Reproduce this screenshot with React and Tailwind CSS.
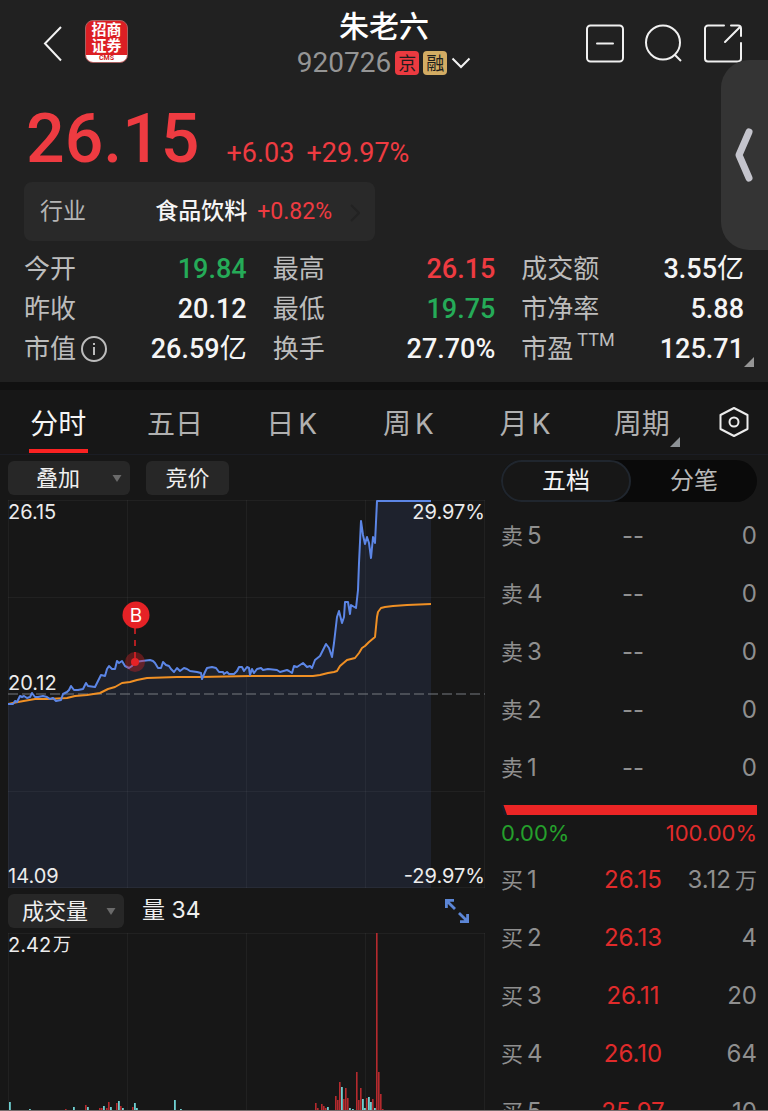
import { useState } from "react";
import clsx from "clsx";

const STATS = [
  { label: "今开", value: "19.84", tone: "down" },
  { label: "最高", value: "26.15", tone: "up" },
  { label: "成交额", value: "3.55亿" },
  { label: "昨收", value: "20.12" },
  { label: "最低", value: "19.75", tone: "down" },
  { label: "市净率", value: "5.88" },
  { label: "市值", value: "26.59亿", info: true },
  { label: "换手", value: "27.70%" },
  { label: "市盈", value: "125.71", sup: "TTM", more: true },
];

const TABS = [
  ["分时"],
  ["五日"],
  ["日", "K"],
  ["周", "K"],
  ["月", "K"],
  ["周期"],
];

const SELLS = [5, 4, 3, 2, 1].map((n) => ({
  side: "卖",
  level: n,
  price: "--",
  volume: "0",
}));

const BUYS = [
  { side: "买", level: 1, price: "26.15", volume: "3.12", unit: "万" },
  { side: "买", level: 2, price: "26.13", volume: "4" },
  { side: "买", level: 3, price: "26.11", volume: "20" },
  { side: "买", level: 4, price: "26.10", volume: "64" },
  { side: "买", level: 5, price: "25.97", volume: "10" },
];

const PRICE_LINE =
  "0,204 5,204 7,201 9,202 12,196 14,197 16,196 19,198 22,197 24,193 27,197 30,197 35,196 39,197 42,199 45,198 48,201 53,200 55,194 59,192 61,190 63,186 66,190 70,190 75,189 78,183 80,186 87,187 90,181 93,175 97,176 99,169 101,166 104,169 107,169 109,161 111,163 114,161 117,166 121,168 124,166 127,162 134,161 142,160 145,161 147,163 150,168 153,168 155,162 158,165 161,166 163,169 166,172 169,168 172,171 176,168 179,169 182,171 189,172 193,173 194,179 197,172 199,168 204,167 208,168 211,172 215,172 216,174 219,172 221,174 226,174 229,171 231,167 234,167 236,171 239,167 241,168 242,175 244,169 246,173 249,169 253,168 255,170 260,169 269,170 272,172 279,170 281,171 284,173 286,166 289,167 295,163 299,167 302,166 304,168 307,160 312,156 318,144 321,148 324,157 326,143 329,117 331,111 334,123 336,117 337,102 340,102 342,114 343,105 348,108 350,90 351,63 353,21 355,35 357,44 359,37 361,43 363,58 365,37 367,43 369,1 423,1";

const AVG_LINE =
  "0,204 10,202 27,199 40,199 59,198 67,196 79,195 92,193 100,189 107,187 114,183 122,182 129,180 139,178 169,177 192,177 242,176 305,176 312,175 320,173 326,172 329,171 332,166 339,160 347,158 351,153 354,148 357,146 361,142 367,137 369,117 370,112 373,108 377,107 385,106 399,105 423,104";

// [x, height, direction]
const BARS = [
  [2, 8, "d"], [22, 1, "d"], [58, 1, "u"], [66, 3, "d"], [78, 5, "u"],
  [80, 3, "d"], [92, 2, "u"], [94, 2, "u"], [96, 4, "d"], [99, 2, "u"],
  [101, 8, "u"], [103, 3, "d"], [109, 7, "u"], [111, 9, "d"], [113, 4, "u"],
  [115, 2, "d"], [125, 3, "u"], [127, 7, "d"], [129, 2, "d"], [167, 10, "d"],
  [173, 1, "d"], [308, 7, "u"], [310, 2, "u"], [314, 6, "u"], [316, 4, "u"],
  [318, 2, "u"], [320, 3, "d"], [328, 14, "u"], [330, 10, "u"], [332, 28, "u"],
  [334, 23, "d"], [336, 11, "u"], [338, 22, "u"], [340, 12, "u"], [342, 2, "d"],
  [345, 1, "d"], [349, 38, "u"], [351, 10, "u"], [353, 22, "u"], [355, 11, "d"],
  [357, 2, "d"], [359, 12, "u"], [361, 13, "d"], [363, 8, "d"], [365, 11, "u"],
  [367, 2, "d"], [369, 177, "u"], [371, 38, "u"], [373, 16, "u"], [375, 1, "u"],
];

function TopBar() {
  return (
    <div className="grid h-[88px] grid-cols-[1fr_auto_1fr]">
      <div className="flex items-start pl-[40px] pt-5">
        <button aria-label="返回" className="h-[46px] w-[26px]">
          <svg viewBox="0 0 26 46" className="h-full w-full" fill="none" stroke="#f2f2f2" strokeWidth="2">
            <path d="M21 7 5 23.500l16 17" />
          </svg>
        </button>
        <div className="ml-[19px] flex h-[43px] w-[43px] flex-col overflow-hidden rounded-lg border border-[#a86060] bg-[#dc1f24] text-white">
          <span className="mt-px text-center text-[15px] font-bold leading-4">招商</span>
          <span className="text-center text-[15px] font-bold leading-4">证券</span>
          <span className="mt-px flex-1 bg-white text-center text-[7px] font-bold leading-[7px] text-[#d02020]">CMS</span>
        </div>
      </div>

      <div className="flex flex-col items-center pt-[10px]">
        <h1 className="text-[30px] font-medium leading-[34px] text-white">朱老六</h1>
        <button className="mt-[5px] flex h-7 items-center gap-1 text-[28px] leading-7 text-[#959595]">
          <span>920726</span>
          <span className="h-6 w-6 rounded-sm bg-[#eb3a40] text-center text-[18px] leading-[25px] text-[#1d1d1d]">京</span>
          <span className="h-6 w-6 rounded-sm bg-[#d3ac63] text-center text-[18px] leading-[25px] text-[#1d1d1d]">融</span>
          <svg viewBox="0 0 20 12" className="h-3 w-5" fill="none" stroke="#f2f2f2" strokeWidth="2">
            <path d="M1.500 1.500 10 10l8.500-8.500" />
          </svg>
        </button>
      </div>

      <div className="flex items-start justify-end gap-[19px] pr-[25px] pt-6 text-[#f0f0f0]">
        <button aria-label="移除自选" className="h-10 w-10">
          <svg viewBox="0 0 40 40" fill="none" stroke="currentColor" strokeWidth="2">
            <rect x="2" y="1.500" width="36" height="36" rx="3.500" />
            <path d="M12 19.500h16" strokeLinecap="round" />
          </svg>
        </button>
        <button aria-label="搜索" className="h-10 w-10">
          <svg viewBox="0 0 40 40" fill="none" stroke="currentColor" strokeWidth="2">
            <circle cx="19" cy="18.500" r="17" />
            <path d="m30.500 30.500 6.500 6.500" />
          </svg>
        </button>
        <button aria-label="分享" className="h-10 w-10">
          <svg viewBox="0 0 40 40" fill="none" stroke="currentColor" strokeWidth="2" strokeLinecap="round">
            <path d="M21 1.500H5A3 3 0 0 0 2 4.500v30a3 3 0 0 0 3 3h30a3 3 0 0 0 3-3V19" />
            <path d="M28 1.500h7a3 3 0 0 1 3 3V12M22 18 37 3" />
          </svg>
        </button>
      </div>
    </div>
  );
}

function Stat({ label, value, tone, info, sup, more }) {
  return (
    <div className="relative flex h-10 items-center justify-between">
      <dt className="flex items-center gap-1 text-[26px] text-[#bcbcbc]">
        {label}
        {info && (
          <svg viewBox="0 0 28 28" className="h-7 w-7" fill="none" stroke="currentColor" strokeWidth="2">
            <circle cx="14" cy="14" r="12" />
            <path d="M14 12v8" />
            <path d="M14 8v2" />
          </svg>
        )}
        {sup && <span className="self-start text-[18px] leading-5">{sup}</span>}
      </dt>
      <dd
        className={clsx(
          "text-[27px] font-medium",
          tone === "up" && "text-[#ee3b41]",
          tone === "down" && "text-[#25ab58]",
          !tone && "text-[#f5f5f5]",
        )}
      >
        {value.replace("亿", "")}
        {value.endsWith("亿") && <span className="font-normal">亿</span>}
      </dd>
      {more && (
        <svg viewBox="0 0 10 10" className="absolute -right-[10px] bottom-[2px] h-[10px] w-[10px]" fill="#969696">
          <path d="M10 0v10H0z" />
        </svg>
      )}
    </div>
  );
}

function PickerButton({ label, wide }) {
  return (
    <div className="relative">
      <select
        aria-label={label}
        className={clsx(
          "block h-[34px] appearance-none rounded-md bg-[#272727] text-[22px] leading-[34px] text-[#efefef]",
          wide ? "w-[122px] pl-7" : "w-[116px] pl-[14px]",
        )}
      >
        <option>{label}</option>
      </select>
      <svg viewBox="0 0 10 8" className="pointer-events-none absolute right-2 top-[14px] h-2 w-[10px]" fill="#6a6a6a">
        <path d="M.500 0h9L5 7z" />
      </svg>
    </div>
  );
}

function PriceChart() {
  return (
    <div className="relative mt-[5px] text-[20px] leading-6 text-[#ececec]">
      <svg viewBox="0 0 477 388" className="block w-full">
        <polygon points={`0,388 ${PRICE_LINE} 423,388`} fill="#1e222d" />
        <path
          d="M.500 0v388M119.500 0v388M238.500 0v388M357.500 0v388M476.500 0v388M0 .500h477M0 97.500h477M0 291.500h477M0 387.500h477"
          stroke="#ffffff"
          strokeOpacity=".045"
        />
        <path d="M0 194h477" stroke="#777a80" strokeDasharray="10 4" />
        <polyline points={AVG_LINE} fill="none" stroke="#f09024" strokeWidth="2" strokeLinejoin="round" />
        <polyline points={PRICE_LINE} fill="none" stroke="#5c86e6" strokeWidth="2" strokeLinejoin="round" />
        <circle cx="127" cy="162" r="10" fill="#e52226" fillOpacity=".35" />
        <circle cx="127" cy="162" r="4" fill="#e52226" />
        <path d="M127 128v34" stroke="#e52226" strokeWidth="1.500" strokeDasharray="6 6" />
        <circle cx="128" cy="115" r="13.500" fill="#e52226" />
        <text x="128" y="122" textAnchor="middle" fontSize="19" fill="#fff">B</text>
      </svg>
      <span className="absolute left-0 top-0">26.15</span>
      <span className="absolute right-0 top-0">29.97%</span>
      <span className="absolute left-0 top-[171px]">20.12</span>
      <span className="absolute bottom-0 left-0">14.09</span>
      <span className="absolute bottom-0 right-0">-29.97%</span>
    </div>
  );
}

function VolumeChart() {
  return (
    <div className="relative text-[20px] leading-6 text-[#ececec]">
      <svg viewBox="0 0 477 177" className="block w-full">
        <path
          d="M.500 0v177M119.500 0v177M238.500 0v177M357.500 0v177M476.500 0v177M0 .500h477"
          stroke="#ffffff"
          strokeOpacity=".045"
        />
        {BARS.map(([x, h, dir]) => (
          <rect
            key={x}
            x={x - 1}
            y={177 - h}
            width={dir === "u" ? 1.6 : 1.8}
            height={h}
            fill={dir === "u" ? "#b52a2e" : "#6fd0d2"}
          />
        ))}
      </svg>
      <span className="absolute left-0 top-0 flex gap-[2px]">
        <span>2.42</span>
        <span className="text-[18px]">万</span>
      </span>
    </div>
  );
}

function OrderRows({ rows, label, priceClass }) {
  return (
    <table className="block w-full" aria-label={label}>
      <tbody className="block">
        {rows.map((row) => (
          <tr
            key={row.level}
            className="grid h-[58px] grid-cols-[100px_64px_1fr] items-center text-[24px] text-[#8f8f8f]"
          >
            <th scope="row" className="flex items-center gap-1 font-normal">
              <span className="text-[22px]">{row.side}</span>
              <span>{row.level}</span>
            </th>
            <td className={clsx("text-center", priceClass)}>{row.price}</td>
            <td className="flex items-center justify-end gap-1">
              <span>{row.volume}</span>
              {row.unit && <span className="text-[22px]">{row.unit}</span>}
            </td>
          </tr>
        ))}
      </tbody>
    </table>
  );
}

export default function App() {
  const [tab, setTab] = useState(0);
  const [book, setBook] = useState(0);

  return (
    <div className="relative flex h-screen flex-col overflow-hidden border-b border-[#766c6c] bg-[#171717] font-[Inter,'Noto_Sans_CJK_SC',sans-serif]">
      {/* Quote header */}
      <header className="shrink-0 bg-[#212121] pb-[13px] font-[Roboto,'Noto_Sans_CJK_SC',sans-serif]">
        <TopBar />

        <div className="flex items-baseline px-[26px] pt-4 text-[27px] text-[#ee3b41]">
          <span className="text-[68px] font-medium leading-[70px]">26.15</span>
          <span className="ml-[27px]">+6.03</span>
          <span className="ml-[12px]">+29.97%</span>
        </div>

        <a
          href="#industry"
          className="ml-6 mt-2 flex h-[59px] w-[351px] items-center rounded-lg bg-[#292929] pl-4 pr-[15px] pt-[2px] text-[23px]"
        >
          <span className="text-[#b4b4b4]">行业</span>
          <span className="ml-auto font-medium text-[#f5f5f5]">食品饮料</span>
          <span className="ml-[10px] text-[#ee3b41]">+0.82%</span>
          <svg viewBox="0 0 10 18" className="ml-[18px] h-[18px] w-[10px]" fill="none" stroke="#222222" strokeWidth="2">
            <path d="m1 1 8 8-8 8" />
          </svg>
        </a>

        <dl className="mt-2 grid grid-cols-3 gap-x-[26px] px-6">
          {STATS.map((s) => (
            <Stat key={s.label} {...s} />
          ))}
        </dl>
      </header>

      {/* Floating drawer handle */}
      <button
        aria-label="展开侧栏"
        className="absolute right-0 top-[60px] flex h-[190px] w-[47px] items-center justify-center rounded-l-[28px] bg-[#343434]"
      >
        <svg viewBox="0 0 20 56" className="h-14 w-5" fill="none" stroke="#c4c4cc" strokeWidth="7" strokeLinecap="round" strokeLinejoin="round">
          <path d="M14 5 4 28l10 23" />
        </svg>
      </button>

      {/* Period tabs */}
      <nav className="flex h-[73px] shrink-0 border-b border-t-8 border-b-[#1b1d24] border-t-[#111111]">
        {TABS.map((parts, i) => (
          <button
            key={parts.join("")}
            onClick={() => setTab(i)}
            className={clsx(
              "relative flex flex-1 items-center justify-center gap-1 pt-[3px] text-[28px]",
              tab === i ? "text-[#f5f5f5]" : "text-[#b0b0b0]",
            )}
          >
            {parts.map((p) => (
              <span key={p}>{p}</span>
            ))}
            {tab === i && <span className="absolute bottom-px h-1 w-[59px] bg-[#fb2222]" />}
            {i === 5 && (
              <svg viewBox="0 0 10 10" className="absolute bottom-[7px] right-5 h-[10px] w-[10px]" fill="#8d9296">
                <path d="M10 0v10H0z" />
              </svg>
            )}
          </button>
        ))}
        <button aria-label="设置" className="flex w-[68px] items-center justify-center">
          <svg viewBox="0 0 32 32" className="h-8 w-8" fill="none" stroke="#ececec" strokeWidth="2" strokeLinejoin="round">
            <path d="M16 2 29.500 9v14L16 30 2.500 23V9z" />
            <circle cx="16" cy="16" r="4.500" />
          </svg>
        </button>
      </nav>

      <main className="grid grid-cols-[477fr_256fr] gap-4 pl-2 pr-[11px]">
        {/* Chart column */}
        <section className="min-w-0">
          <div className="flex gap-4 pt-[6px]">
            <PickerButton label="叠加" wide />
            <button className="h-[34px] w-[83px] rounded-md bg-[#272727] text-[22px] leading-[34px] text-[#efefef]">
              竞价
            </button>
          </div>
          <PriceChart />

          <div className="flex h-[45px] items-center text-[23px] text-[#efefef]">
            <PickerButton label="成交量" />
            <span className="ml-[18px]">量 34</span>
            <button aria-label="全屏" className="ml-auto mr-[14px] h-7 w-7">
              <svg viewBox="0 0 28 28" fill="none" stroke="#5c86d6" strokeWidth="2.800">
                <path d="M3.400 11V3.400H11M3.400 3.400l8.600 8.600M24.600 17v7.600H17M24.600 24.600 16 16" />
              </svg>
            </button>
          </div>
          <VolumeChart />
        </section>

        {/* Order book column */}
        <section className="min-w-0 pt-[5px]">
          <div className="mb-[5px] flex h-[42px] rounded-full bg-[#0a0a0a] text-[24px]">
            {["五档", "分笔"].map((name, i) => (
              <button
                key={name}
                onClick={() => setBook(i)}
                className={clsx(
                  "flex-1 rounded-full",
                  book === i
                    ? "border-2 border-[#20262e] bg-[#171717] text-[#f5f5f5]"
                    : "text-[#b8b8b8]",
                )}
              >
                {name}
              </button>
            ))}
          </div>

          <OrderRows rows={SELLS} label="卖盘" priceClass="text-[#8f8f8f]" />

          <svg viewBox="0 0 256 10" preserveAspectRatio="none" className="mt-2 block h-[10px] w-full">
            <path d="M0 0h3l3 10H3z" fill="#141c28" />
            <path d="M2.500 0H256v10H6z" fill="#eb2525" />
          </svg>
          <div className="flex h-9 items-center justify-between text-[22px]">
            <span className="text-[#25a02c]">0.00%</span>
            <span className="text-[#e02b2b]">100.00%</span>
          </div>

          <OrderRows rows={BUYS} label="买盘" priceClass="text-[#e02b2b]" />
        </section>
      </main>
    </div>
  );
}
